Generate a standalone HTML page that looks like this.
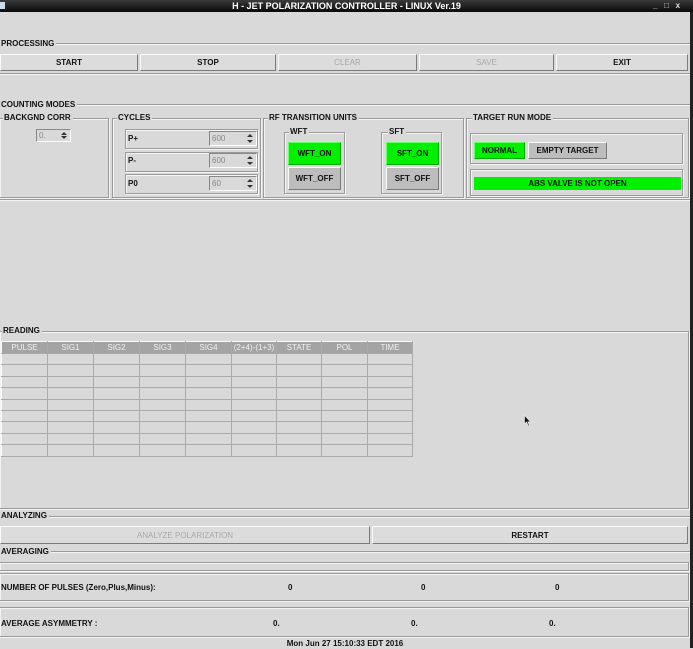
<!DOCTYPE html>
<html><head><meta charset="utf-8"><style>
*{margin:0;padding:0;box-sizing:border-box}
body{width:693px;height:648px;background:#d9d9d9;font-family:"Liberation Sans",sans-serif;font-size:8px;font-weight:bold;color:#111;position:relative;overflow:hidden}
.a{position:absolute}
.t{position:absolute;white-space:nowrap;line-height:10px;background:#d9d9d9;padding:0 2px 0 1px}
.ln{position:absolute;height:2px;border-top:1px solid #9a9a9a;border-bottom:1px solid #f4f4f4}
.box{position:absolute;border:1px solid #9a9a9a;box-shadow:inset 1px 1px 0 #f4f4f4,1px 1px 0 #f4f4f4}
.btn{position:absolute;background:#dcdcdc;border:1px solid;border-color:#fafafa #7a7a7a #7a7a7a #fafafa;text-align:center;display:flex;align-items:center;justify-content:center}
.dis{color:#a8a8a8;font-weight:normal}
.g{background:#00f000;border-color:#6f6 #0a0 #0a0 #6f6}
.gr{background:#bdbdbd}
.spin{position:absolute;background:#d9d9d9;border:1px solid;border-color:#888 #fff #fff #888;font-weight:normal;color:#888;padding-left:2px;line-height:11px}
.spin:after{content:"";position:absolute;right:3px;top:2px;width:0;height:0;border-left:3px solid transparent;border-right:3px solid transparent;border-bottom:3px solid #333}
.spin:before{content:"";position:absolute;right:3px;bottom:2px;width:0;height:0;border-left:3px solid transparent;border-right:3px solid transparent;border-top:3px solid #333}
table{border-collapse:collapse;position:absolute;left:1px;top:341px;width:411px;table-layout:fixed}
td,th{border:1px solid #fafafa;border-right-color:#aaa;border-bottom-color:#aaa;height:11.4px;padding:0;overflow:hidden}
th{background:#a4a4a4;color:#f0f0f0;font-weight:normal;font-size:8px;height:12px;white-space:nowrap}
</style></head><body>
<div class="a" style="left:0;top:0;width:693px;height:12px;background:linear-gradient(#3a3a3a,#0a0a0a);color:#fff;font-size:9px;text-align:center;line-height:12px">H - JET POLARIZATION CONTROLLER - LINUX Ver.19</div>
<div class="a" style="left:0;top:2px;width:5px;height:7px;background:#cde"></div>
<div class="a" style="left:653px;top:0;color:#ddd;font-size:8px;line-height:12px;white-space:nowrap;width:40px">_&nbsp;&nbsp;&nbsp;□&nbsp;&nbsp;&nbsp;x</div>
<div class="a" style="left:690px;top:12px;width:3px;height:636px;background:#222"></div>

<div class="ln" style="left:0;top:43px;width:690px"></div><div class="t" style="left:0;top:39px">PROCESSING</div>
<div class="btn" style="left:0;top:54px;width:138px;height:17px">START</div>
<div class="btn" style="left:140px;top:54px;width:136px;height:17px">STOP</div>
<div class="btn dis" style="left:278px;top:54px;width:139px;height:17px">CLEAR</div>
<div class="btn dis" style="left:419px;top:54px;width:135px;height:17px">SAVE</div>
<div class="btn" style="left:556px;top:54px;width:132px;height:17px">EXIT</div>
<div class="ln" style="left:0;top:73px;width:690px"></div>

<div class="ln" style="left:0;top:104px;width:690px"></div><div class="t" style="left:0;top:100px">COUNTING MODES</div>
<div class="box" style="left:-1px;top:118px;width:110px;height:80px"></div><div class="t" style="left:3px;top:113px">BACKGND CORR</div>
<div class="spin" style="left:36px;top:129px;width:35px;height:13px">0.</div>
<div class="box" style="left:112px;top:118px;width:149px;height:80px"></div><div class="t" style="left:117px;top:113px">CYCLES</div>
<div class="box" style="left:125px;top:129px;width:133px;height:20px"></div><div class="t" style="left:127px;top:134px;background:none">P+</div><div class="spin" style="left:209px;top:131px;width:48px;height:15px;line-height:13px">600</div>
<div class="box" style="left:125px;top:152px;width:133px;height:20px"></div><div class="t" style="left:127px;top:156px;background:none">P-</div><div class="spin" style="left:209px;top:153px;width:48px;height:15px;line-height:13px">600</div>
<div class="box" style="left:125px;top:174px;width:133px;height:20px"></div><div class="t" style="left:127px;top:179px;background:none">P0</div><div class="spin" style="left:209px;top:176px;width:48px;height:15px;line-height:13px">60</div>
<div class="box" style="left:263px;top:118px;width:201px;height:80px"></div><div class="t" style="left:268px;top:113px">RF TRANSITION UNITS</div>
<div class="box" style="left:284px;top:132px;width:61px;height:62px"></div><div class="t" style="left:289px;top:127px">WFT</div>
<div class="btn g" style="left:288px;top:142px;width:53px;height:23px">WFT_ON</div>
<div class="btn gr" style="left:288px;top:167px;width:53px;height:23px">WFT_OFF</div>
<div class="box" style="left:381px;top:132px;width:61px;height:62px"></div><div class="t" style="left:388px;top:127px">SFT</div>
<div class="btn g" style="left:386px;top:142px;width:53px;height:23px">SFT_ON</div>
<div class="btn gr" style="left:386px;top:167px;width:53px;height:23px">SFT_OFF</div>
<div class="box" style="left:466px;top:118px;width:223px;height:80px"></div><div class="t" style="left:472px;top:113px">TARGET RUN MODE</div>
<div class="box" style="left:470px;top:133px;width:213px;height:31px"></div>
<div class="btn g" style="left:474px;top:142px;width:51px;height:17px">NORMAL</div>
<div class="btn gr" style="left:528px;top:142px;width:79px;height:17px">EMPTY TARGET</div>
<div class="box" style="left:470px;top:169px;width:213px;height:27px"></div>
<div class="a" style="left:474px;top:177px;width:207px;height:13px;background:#00f000;text-align:center;line-height:13px">ABS VALVE IS NOT OPEN</div>
<div class="ln" style="left:0;top:199px;width:690px"></div>

<div class="box" style="left:-1px;top:331px;width:690px;height:178px"></div><div class="t" style="left:2px;top:326px">READING</div>
<table>
<colgroup><col style="width:46px"><col style="width:46px"><col style="width:46px"><col style="width:46px"><col style="width:46px"><col style="width:45px"><col style="width:45px"><col style="width:46px"><col style="width:45px"></colgroup>
<tr><th>PULSE</th><th>SIG1</th><th>SIG2</th><th>SIG3</th><th>SIG4</th><th>(2+4)-(1+3)</th><th>STATE</th><th>POL</th><th>TIME</th></tr>
<tr><td></td><td></td><td></td><td></td><td></td><td></td><td></td><td></td><td></td></tr>
<tr><td></td><td></td><td></td><td></td><td></td><td></td><td></td><td></td><td></td></tr>
<tr><td></td><td></td><td></td><td></td><td></td><td></td><td></td><td></td><td></td></tr>
<tr><td></td><td></td><td></td><td></td><td></td><td></td><td></td><td></td><td></td></tr>
<tr><td></td><td></td><td></td><td></td><td></td><td></td><td></td><td></td><td></td></tr>
<tr><td></td><td></td><td></td><td></td><td></td><td></td><td></td><td></td><td></td></tr>
<tr><td></td><td></td><td></td><td></td><td></td><td></td><td></td><td></td><td></td></tr>
<tr><td></td><td></td><td></td><td></td><td></td><td></td><td></td><td></td><td></td></tr>
<tr><td></td><td></td><td></td><td></td><td></td><td></td><td></td><td></td><td></td></tr>
</table>
<svg class="a" style="left:524px;top:415px" width="8" height="12" viewBox="0 0 8 12"><path d="M0.5 0.5 L0.5 9 L2.5 7 L4.5 11 L5.5 10.5 L3.8 6.8 L6.5 6.8 Z" fill="#111" stroke="#eee" stroke-width="0.6"/></svg>

<div class="ln" style="left:0;top:516px;width:690px"></div><div class="t" style="left:0;top:511px">ANALYZING</div>
<div class="btn dis" style="left:0;top:526px;width:370px;height:18px">ANALYZE POLARIZATION</div>
<div class="btn" style="left:372px;top:526px;width:316px;height:18px">RESTART</div>
<div class="ln" style="left:0;top:551px;width:690px"></div><div class="t" style="left:0;top:547px">AVERAGING</div>
<div class="box" style="left:-1px;top:562px;width:690px;height:9px"></div>
<div class="box" style="left:-1px;top:573px;width:690px;height:28px"></div>
<div class="t" style="left:0;top:583px;background:none">NUMBER OF PULSES (Zero,Plus,Minus):</div>
<div class="t" style="left:287px;top:583px;background:none">0</div><div class="t" style="left:420px;top:583px;background:none">0</div><div class="t" style="left:554px;top:583px;background:none">0</div>
<div class="box" style="left:-1px;top:607px;width:690px;height:30px"></div>
<div class="t" style="left:0;top:619px;background:none">AVERAGE ASYMMETRY :</div>
<div class="t" style="left:272px;top:619px;background:none">0.</div><div class="t" style="left:410px;top:619px;background:none">0.</div><div class="t" style="left:548px;top:619px;background:none">0.</div>
<div class="a" style="left:0;top:639px;width:690px;text-align:center;line-height:10px">Mon Jun 27 15:10:33 EDT 2016</div>
</body></html>
